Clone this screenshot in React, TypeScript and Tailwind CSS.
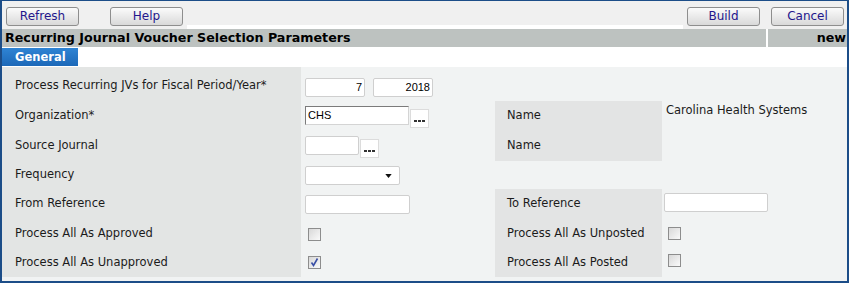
import React from "react";

const FONT = "font-['DejaVu_Sans',Verdana,sans-serif]";

function Btn({ label, className = "" }: { label: string; className?: string }) {
  return (
    <button
      className={`h-[19px] w-[73px] rounded-[3px] border border-[#8e8e8e] bg-gradient-to-b from-[#fbfbfb] to-[#d9d9d9] text-[12px] leading-[17px] text-[#24168c] ${className}`}
    >
      {label}
    </button>
  );
}

function Input({ w, value = "", right = false, inset = false }: { w: string; value?: string; right?: boolean; inset?: boolean }) {
  return (
    <div
      className={`${w} h-[19px] bg-white px-[2px] font-['Liberation_Sans',Arial,sans-serif] text-[11px] leading-[17px] text-black ${
        right ? "text-right" : "text-left"
      } ${
        inset
          ? "border border-t-[#7b7b7b] border-l-[#7b7b7b] border-r-[#d4d4d4] border-b-[#d4d4d4]"
          : "rounded-[2px] border border-[#cfcfcf]"
      }`}
    >
      {value}
    </div>
  );
}

function Lookup() {
  return (
    <div className="mt-[3px] ml-[1px] flex h-[19px] w-[19px] items-end justify-center gap-[1px] border border-[#dcdcdc] bg-white pb-[5px]">
      <span className="h-[2px] w-[3px] bg-[#333]" />
      <span className="h-[2px] w-[3px] bg-[#333]" />
      <span className="h-[2px] w-[3px] bg-[#333]" />
    </div>
  );
}

function Check({ checked = false }: { checked?: boolean }) {
  return (
    <div className="relative h-[13px] w-[13px] border border-[#8d8d8d] bg-gradient-to-br from-[#d8d8d8] to-[#fafafa]">
      {checked && (
        <svg viewBox="0 0 11 11" className="absolute inset-0 h-[11px] w-[11px]">
          <path d="M2.5 5.5 L4.5 8.5 L8.5 1.5" fill="none" stroke="#3a4fa6" strokeWidth="1.6" />
        </svg>
      )}
    </div>
  );
}

function Label({ text, row }: { text: string; row: string }) {
  return (
    <div className={`${row} col-start-1 flex items-center bg-[#e3e5e4] pl-[13px]`}>{text}</div>
  );
}

export default function App() {
  return (
    <div
      className={`flex h-[283px] w-[849px] flex-col border-t border-r-2 border-b-2 border-l-2 border-[#1c4d88] bg-white ${FONT} text-[11.5px] text-[#1b1b1b]`}
    >
      {/* toolbar */}
      <div className="flex h-[28px]">
        <div className="flex w-[185px] items-start gap-[31px] bg-[#f0f0f0] pl-[4px] pt-[6px]">
          <Btn label="Refresh" className="w-[72px]" />
          <Btn label="Help" />
        </div>
        <div className="flex flex-1 flex-col">
          <div className="h-[24px] bg-[#f0f0f0]" />
        </div>
        <div className="flex w-[164px] items-start gap-[11px] bg-[#f0f0f0] pl-[4px] pt-[6px]">
          <Btn label="Build" className="w-[72px]" />
          <Btn label="Cancel" />
        </div>
      </div>

      {/* title */}
      <div className="flex h-[18px] gap-[2px] text-[12.7px] font-bold leading-[18px] text-black">
        <div className="flex-1 bg-[#bdc2c0] pl-[3px]">Recurring Journal Voucher Selection Parameters</div>
        <div className="w-[79px] bg-[#bdc2c0] pr-[1px] text-right">new</div>
      </div>

      {/* tabs */}
      <div className="h-[20px] pt-[1px]">
        <div className="h-[18px] w-[76px] bg-gradient-to-b from-[#2f84d4] to-[#1c68b8] pl-[13px] text-[11.5px] font-bold leading-[18px] text-white">
          General
        </div>
      </div>

      {/* form */}
      <div className="flex-1 bg-[#f1f3f3] pb-[4px]">
        <div className="grid h-full grid-cols-[299px_194px_167px_1fr] grid-rows-[34px_30px_30px_28px_30px_29px_29px]">
          <div className="col-start-1 row-start-1 flex items-center bg-[#e3e5e4] pl-[13px] pt-[4px]">
            Process Recurring JVs for Fiscal Period/Year*
          </div>
          <Label text="Organization*" row="row-start-2" />
          <Label text="Source Journal" row="row-start-3" />
          <Label text="Frequency" row="row-start-4" />
          <Label text="From Reference" row="row-start-5" />
          <Label text="Process All As Approved" row="row-start-6" />
          <Label text="Process All As Unapproved" row="row-start-7" />

          {/* values column */}
          <div className="col-start-2 row-start-1 flex items-center gap-[8px] pl-[4px] pt-[6px]">
            <Input w="w-[60px]" value="7" right />
            <Input w="w-[60px]" value="2018" right />
          </div>
          <div className="col-start-2 row-start-2 flex items-start pl-[4px] pt-[5px]">
            <Input w="w-[104px]" value="CHS" inset />
            <Lookup />
          </div>
          <div className="col-start-2 row-start-3 flex items-start pl-[4px] pt-[5px]">
            <Input w="w-[54px]" />
            <Lookup />
          </div>
          <div className="col-start-2 row-start-4 flex items-center pl-[4px]">
            <div className="relative h-[19px] w-[95px] rounded-[2px] border border-[#cfcfcf] bg-white">
              <svg viewBox="0 0 8 5" className="absolute right-[7px] top-[7px] h-[4px] w-[7px]">
                <path d="M0 0 H8 L4 5 Z" fill="#111" />
              </svg>
            </div>
          </div>
          <div className="col-start-2 row-start-5 flex items-center pl-[4px]">
            <Input w="w-[105px]" />
          </div>
          <div className="col-start-2 row-start-6 flex items-center pl-[7px] pt-[2px]">
            <Check />
          </div>
          <div className="col-start-2 row-start-7 flex items-center pl-[7px]">
            <Check checked />
          </div>

          {/* right block */}
          <div className="col-start-3 row-start-2 flex items-center bg-[#e3e4e4] pl-[12px]">Name</div>
          <div className="col-start-3 row-start-3 flex items-center bg-[#e3e4e4] pl-[12px]">Name</div>
          <div className="col-start-4 row-start-2 pl-[4px] pt-[2px] leading-[14px]">Carolina Health Systems</div>

          <div className="col-start-3 row-start-5 flex items-center bg-[#e3e4e4] pl-[12px]">To Reference</div>
          <div className="col-start-3 row-start-6 flex items-center bg-[#e3e4e4] pl-[12px]">Process All As Unposted</div>
          <div className="col-start-3 row-start-7 flex items-center bg-[#e3e4e4] pl-[12px]">Process All As Posted</div>
          <div className="col-start-4 row-start-5 flex items-start pl-[2px] pt-[4px]">
            <Input w="w-[104px]" />
          </div>
          <div className="col-start-4 row-start-6 flex items-start pl-[6px] pt-[8px]">
            <Check />
          </div>
          <div className="col-start-4 row-start-7 flex items-start pl-[6px] pt-[6px]">
            <Check />
          </div>
        </div>
      </div>
    </div>
  );
}
